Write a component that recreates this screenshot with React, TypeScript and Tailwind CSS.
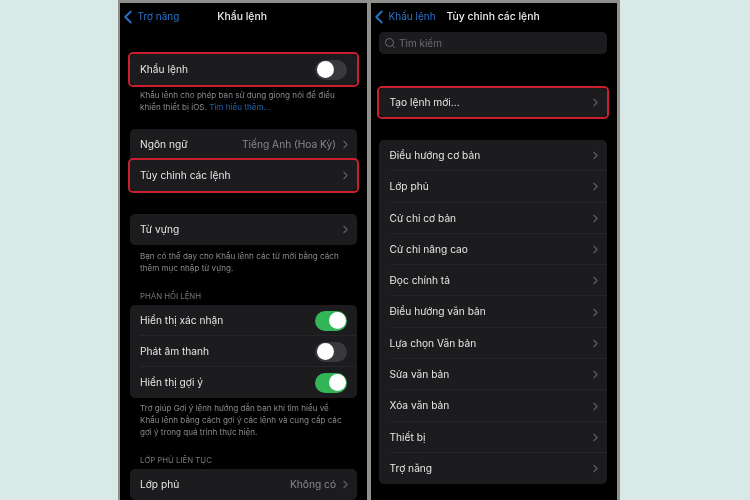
import React from "react";
import { ChevronLeft, ChevronRight, Search } from "lucide-react";

const Chevron = () => (
  <ChevronRight size={13} strokeWidth={2} className="text-[#5f5f63] shrink-0 -mr-[5px]" />
);

const Toggle = ({ on }: { on: boolean }) => (
  <div className={`w-[32px] h-[20px] rounded-full flex items-center p-[1.5px] ${on ? "bg-[#32b557] justify-end" : "bg-[#39393d] justify-start"}`}>
    <div className="w-[17px] h-[17px] rounded-full bg-white" />
  </div>
);

const Row = ({
  label,
  value,
  chevron,
  toggle,
  red,
  divider,
  h = "h-[31px]",
}: {
  label: string;
  value?: string;
  chevron?: boolean;
  toggle?: "on" | "off";
  red?: boolean;
  divider?: boolean;
  h?: string;
}) => (
  <div className={`relative ${h} flex items-center pl-[10.5px] pr-[10px] text-[10.2px] text-[#e6e6e6] ${red ? "rounded-[3px] outline-2 outline-[#c8202e] z-10" : ""}`}>
    <span className="flex-1 truncate">{label}</span>
    {value && <span className="text-[#88888c] mr-[3px]">{value}</span>}
    {chevron && <Chevron />}
    {toggle && <Toggle on={toggle === "on"} />}
    {divider && <div className="absolute bottom-0 left-[10.5px] right-0 h-px bg-[#262628]" />}
  </div>
);

const Group = ({ className = "", children }: { className?: string; children: React.ReactNode }) => (
  <div className={`bg-[#1c1c1e] rounded-[5px] ${className}`}>{children}</div>
);

const Footer = ({ className = "", children }: { className?: string; children: React.ReactNode }) => (
  <p className={`pl-[20px] pr-[22px] text-[8.1px] leading-[11.6px] text-[#8a8a8e] ${className}`}>{children}</p>
);

const Header = ({ className = "", children }: { className?: string; children: React.ReactNode }) => (
  <p className={`pl-[20px] text-[7.8px] leading-[11px] text-[#77777b] ${className}`}>{children}</p>
);

const Nav = ({ back, title, titleClass }: { back: string; title: string; titleClass: string }) => (
  <div className="h-[27px] flex items-center shrink-0">
    <div className="flex items-center text-[#2a74c8] text-[10px] -ml-[3.5px]">
      <ChevronLeft size={22} strokeWidth={2} className="-mr-[1px]" />
      <span>{back}</span>
    </div>
    <span className={`font-medium text-[10.4px] text-[#ececec] ${titleClass}`}>{title}</span>
  </div>
);

const commands = [
  "Điều hướng cơ bản",
  "Lớp phủ",
  "Cử chỉ cơ bản",
  "Cử chỉ nâng cao",
  "Đọc chính tả",
  "Điều hướng văn bản",
  "Lựa chọn Văn bản",
  "Sửa văn bản",
  "Xóa văn bản",
  "Thiết bị",
  "Trợ năng",
];

export default function App() {
  return (
    <div className="w-[750px] h-[500px] overflow-hidden bg-[#d9e9e8] flex pl-[118px] font-['Inter',sans-serif] blur-[0.35px]">
      <div className="w-[502px] h-[500px] bg-[#8f8f8c] pt-[3px] px-[2px] flex gap-[4px]">
        {/* Left screen */}
        <div className="w-[247px] h-[497px] bg-black overflow-hidden flex flex-col">
          <Nav back="Trợ năng" title="Khẩu lệnh" titleClass="ml-[38px]" />
          <div className="pl-[9.5px] pr-[10px]">
            <Group className="mt-[24px]">
              <Row label="Khẩu lệnh" toggle="off" red />
            </Group>
          </div>
          <Footer className="mt-[5px]">
            Khẩu lệnh cho phép bạn sử dụng giọng nói để điều khiển thiết bị iOS. <span className="text-[#1f62ad]">Tìm hiểu thêm...</span>
          </Footer>
          <div className="pl-[9.5px] pr-[10px]">
            <Group className="mt-[16px]">
              <Row label="Ngôn ngữ" value="Tiếng Anh (Hoa Kỳ)" chevron />
              <Row label="Tùy chỉnh các lệnh" chevron red />
            </Group>
            <Group className="mt-[23px]">
              <Row label="Từ vựng" chevron />
            </Group>
          </div>
          <Footer className="mt-[6px]">
            Bạn có thể dạy cho Khẩu lệnh các từ mới bằng cách thêm mục nhập từ vựng.
          </Footer>
          <Header className="mt-[17px]">PHẢN HỒI LỆNH</Header>
          <div className="pl-[9.5px] pr-[10px]">
            <Group className="mt-[3px]">
              <Row label="Hiển thị xác nhận" toggle="on" divider />
              <Row label="Phát âm thanh" toggle="off" divider />
              <Row label="Hiển thị gợi ý" toggle="on" />
            </Group>
          </div>
          <Footer className="mt-[5px]">
            Trợ giúp Gợi ý lệnh hướng dẫn bạn khi tìm hiểu về Khẩu lệnh bằng cách gợi ý các lệnh và cung cấp các gợi ý trong quá trình thực hiện.
          </Footer>
          <Header className="mt-[17px]">LỚP PHỦ LIÊN TỤC</Header>
          <div className="pl-[9.5px] pr-[10px]">
            <Group className="mt-[3px]">
              <Row label="Lớp phủ" value="Không có" chevron />
            </Group>
          </div>
        </div>

        {/* Right screen */}
        <div className="w-[246px] h-[497px] bg-black overflow-hidden flex flex-col">
          <Nav back="Khẩu lệnh" title="Tùy chỉnh các lệnh" titleClass="ml-[11px]" />
          <div className="pl-[8px] pr-[10px]">
            <div className="mt-[2px] h-[22px] rounded-[5px] bg-[#1c1c1e] flex items-center pl-[5px] text-[10px] text-[#6c6c70]">
              <Search size={12} strokeWidth={2} className="mr-[3px]" />
              <span>Tìm kiếm</span>
            </div>
            <Group className="mt-[34px]">
              <Row label="Tạo lệnh mới..." chevron red h="h-[29px]" />
            </Group>
            <Group className="mt-[23px]">
              {commands.map((c, i) => (
                <Row key={c} label={c} chevron divider={i < commands.length - 1} h="h-[31.3px]" />
              ))}
            </Group>
          </div>
        </div>
      </div>
    </div>
  );
}
